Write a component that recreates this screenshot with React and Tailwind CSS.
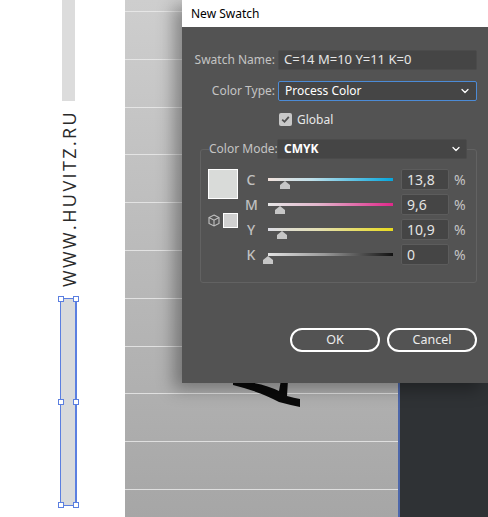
import React from 'react';
import { ChevronDown } from 'lucide-react';

const SLIDERS = [
  { key: 'C', value: 13.8, text: '13,8', track: 'bg-[linear-gradient(to_right,#f2e2dc,#bfe0ea_35%,#06a6dc)]' },
  { key: 'M', value: 9.6, text: '9,6', track: 'bg-[linear-gradient(to_right,#e6e6e6,#e2b6cc_40%,#e0288a)]' },
  { key: 'Y', value: 10.9, text: '10,9', track: 'bg-[linear-gradient(to_right,#dcdce4,#e4e0b4_40%,#e8da1e)]' },
  { key: 'K', value: 0, text: '0', track: 'bg-[linear-gradient(to_right,#e2e2e2,#9a9a9a_45%,#111111)]' },
];

const Handle = ({ className }) => (
  <div className={`absolute w-[6px] h-[6px] bg-white border border-[#5b7fe0] ${className}`} />
);

const CubeIcon = () => (
  <svg width="12" height="13" viewBox="0 0 12 13" fill="none" stroke="#c2c2c2" strokeWidth="1.1">
    <path d="M6 1 L11 3.6 L11 9.4 L6 12 L1 9.4 L1 3.6 Z" />
    <path d="M1 3.6 L6 6.2 L11 3.6 M6 6.2 L6 12" />
  </svg>
);

const Slider = ({ item }) => (
  <div className="flex items-center h-[21px]">
    <span className="w-[12px] text-center text-[14px] font-medium text-[#c0c0c0]">{item.key}</span>
    <div className="relative ml-[11px] w-[125px] h-[21px]">
      <div className={`mt-[9px] h-[3px] ${item.track}`} />
      <svg
        className="absolute top-[12px]"
        style={{ left: `${(item.value / 100) * 125 - 5}px` }}
        width="10"
        height="8"
        viewBox="0 0 10 8"
      >
        <path d="M5 0 L10 4 L10 8 L0 8 L0 4 Z" fill="#c6c6c6" />
      </svg>
    </div>
    <div className="ml-[8px] w-[48px] h-[21px] bg-[#454545] border border-[#5c5c5c] rounded-[2px] flex items-center pl-[5px] text-[14px] text-[#e4e4e4]">
      {item.text}
    </div>
    <span className="ml-[5px] text-[14px] text-[#c4c4c4]">%</span>
  </div>
);

const App = () => {
  return (
    <div className="relative w-[488px] h-[517px] flex overflow-hidden bg-white font-['Noto_Sans','Open_Sans',sans-serif]">
      {/* artboard strip on the left */}
      <div className="w-[125px] shrink-0 flex flex-col">
        <div className="ml-[62px] w-[13px] h-[101px] bg-[#dcdcdc]" />
        <div className="ml-[59px] mt-[12px] h-[174px] [writing-mode:vertical-rl] rotate-180 text-[18px] leading-[20px] tracking-[2.4px] text-[#2a2a2a] font-['Open_Sans',sans-serif] font-normal whitespace-nowrap">
          WWW.HUVITZ.RU
        </div>
        <div className="relative ml-[60px] mt-[11px] w-[17px] h-[208px] border border-r-2 border-[#5b7fe0] bg-[#d8dadc]">
          <Handle className="-left-[3px] -top-[3px]" />
          <Handle className="-right-[4px] -top-[3px]" />
          <Handle className="-left-[3px] top-[100px]" />
          <Handle className="-right-[4px] top-[100px]" />
          <Handle className="-left-[3px] -bottom-[3px]" />
          <Handle className="-right-[4px] -bottom-[3px]" />
        </div>
      </div>

      {/* canvas */}
      <div className="flex-1 flex">
        <div className="relative w-[273px] shrink-0 bg-[linear-gradient(to_bottom,#cecece,#a6a6a6)]">
          <div className="h-[11px]" />
          {Array.from({ length: 11 }).map((_, i) => (
            <div key={i} className="h-[47.8px] border-t border-[#ececec]/80" />
          ))}
          <svg className="absolute left-[108px] top-[376px]" width="70" height="34" viewBox="0 0 70 34">
            <path
              d="M0 6 L16 6 Q34 9 46 15 L48 4 L55 4 L54 20 Q61 22 67 23 L67 31 Q57 29 46 26 Q28 16 0 9 Z"
              fill="#0a0a0a"
            />
          </svg>
        </div>
        <div className="flex-1 bg-[#2f3235] border-l-2 border-[#4d67aa]" />
      </div>

      {/* New Swatch dialog */}
      <div className="absolute left-[182px] top-0 w-[306px] h-[383px] bg-[#535353] shadow-[-8px_6px_16px_rgba(0,0,0,0.35)]">
        <div className="h-[27px] bg-white flex items-center pl-[9px] text-[12px] text-black">New Swatch</div>

        <div className="pt-[23px] pr-[11px]">
          <div className="flex items-center h-[20px]">
            <span className="w-[93px] text-right text-[12px] text-[#c4c4c4] whitespace-nowrap">Swatch Name:</span>
            <div className="ml-[3px] w-[199px] h-[20px] bg-[#454545] border border-[#4b4b4b] rounded-[2px] flex items-center pl-[5px] text-[13px] text-[#e6e6e6]">
              C=14 M=10 Y=11 K=0
            </div>
          </div>

          <div className="flex items-center h-[20px] mt-[11px]">
            <span className="w-[93px] text-right text-[12px] text-[#c4c4c4] whitespace-nowrap">Color Type:</span>
            <div className="ml-[3px] w-[199px] h-[20px] bg-[#454545] border border-[#4c8bd6] rounded-[2px] flex items-center justify-between pl-[6px] pr-[5px] text-[12px] text-white">
              Process Color
              <ChevronDown size={12} strokeWidth={2.5} className="text-white" />
            </div>
          </div>

          <div className="flex items-center h-[13px] mt-[12px] pl-[97px]">
            <div className="w-[13px] h-[13px] rounded-[2px] bg-[#c8c8c8] flex items-center justify-center">
              <svg width="9" height="9" viewBox="0 0 9 9">
                <path d="M1.2 4.6 L3.5 6.8 L7.8 1.8" fill="none" stroke="#505050" strokeWidth="1.8" />
              </svg>
            </div>
            <span className="ml-[5px] text-[12px] text-[#e8e8e8]">Global</span>
          </div>

          <fieldset className="mt-[13px] ml-[18px] w-[277px] border border-[#626262] rounded-[3px] pl-[8px] pb-[17px]">
            <legend className="w-[258px] h-[20px] flex items-center">
              <span className="w-[63px] text-[12px] text-[#c4c4c4] whitespace-nowrap bg-[#535353]">Color Mode:</span>
              <div className="ml-auto w-[190px] h-[20px] bg-[#454545] border border-[#4b4b4b] rounded-[2px] flex items-center justify-between pl-[6px] pr-[4px] text-[12px] font-bold text-white">
                CMYK
                <ChevronDown size={12} strokeWidth={2.5} className="text-white" />
              </div>
            </legend>

            <div className="flex mt-[10px]">
              <div className="w-[30px] -ml-px flex flex-col">
                <div className="w-[30px] h-[30px] bg-[#d9dbd9] border border-white" />
                <div className="mt-[14px] flex items-center">
                  <div className="w-[12px]">
                    <CubeIcon />
                  </div>
                  <div className="ml-[3px] w-[15px] h-[15px] bg-[#d0d0d0] border border-white" />
                </div>
              </div>
              <div className="ml-[7px] flex flex-col gap-[4px]">
                {SLIDERS.map((s) => (
                  <Slider key={s.key} item={s} />
                ))}
              </div>
            </div>
          </fieldset>

          <div className="mt-[45px] flex justify-end gap-[7px]">
            <button className="w-[90px] h-[24px] rounded-full border-2 border-white text-[12.5px] text-[#ececec] flex items-center justify-center">
              OK
            </button>
            <button className="w-[90px] h-[24px] rounded-full border-2 border-white text-[12.5px] text-[#ececec] flex items-center justify-center">
              Cancel
            </button>
          </div>
        </div>
      </div>
    </div>
  );
};

export default App;
